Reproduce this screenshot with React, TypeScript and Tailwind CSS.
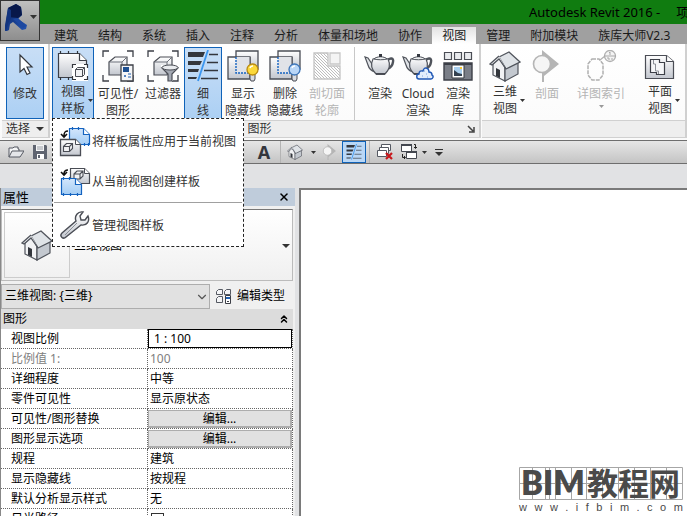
import React from 'react';
import type { ReactNode } from 'react';
import { ChevronDown, ChevronsUp, X } from 'lucide-react';

const tabs = ['建筑', '结构', '系统', '插入', '注释', '分析', '体量和场地', '协作', '视图', '管理', '附加模块', '族库大师V2.3'];

type PropertyRow = {
  id: string;
  label: string;
  value?: string;
  kind: 'input' | 'text' | 'button' | 'checkbox';
  disabled?: boolean;
};

const properties: PropertyRow[] = [
  { id: 'scale', label: '视图比例', value: '1 : 100', kind: 'input' },
  { id: 'ratio', label: '比例值 1:', value: '100', kind: 'text', disabled: true },
  { id: 'detail', label: '详细程度', value: '中等', kind: 'text' },
  { id: 'parts', label: '零件可见性', value: '显示原状态', kind: 'text' },
  { id: 'overrides', label: '可见性/图形替换', value: '编辑...', kind: 'button' },
  { id: 'display', label: '图形显示选项', value: '编辑...', kind: 'button' },
  { id: 'discipline', label: '规程', value: '建筑', kind: 'text' },
  { id: 'hidden', label: '显示隐藏线', value: '按规程', kind: 'text' },
  { id: 'analysis', label: '默认分析显示样式', value: '无', kind: 'text' },
  { id: 'sun', label: '日光路径', kind: 'checkbox' },
];

/* ---------- icons ---------- */

function Gradients() {
  return (
    <svg className="absolute h-0 w-0" aria-hidden="true">
      <defs>
        <linearGradient id="steel" x1="0" y1="0" x2="0" y2="1">
          <stop offset="0" stopColor="#ffffff" />
          <stop offset="1" stopColor="#c2c6ce" />
        </linearGradient>
        <linearGradient id="sky" x1="0" y1="0" x2="0" y2="1">
          <stop offset="0" stopColor="#d3e6fb" />
          <stop offset="1" stopColor="#a4cdf5" />
        </linearGradient>
        <linearGradient id="navy" x1="0" y1="0" x2="1" y2="1">
          <stop offset="0" stopColor="#0a2260" />
          <stop offset="1" stopColor="#2456b4" />
        </linearGradient>
        <pattern id="hatch" width="3" height="3" patternUnits="userSpaceOnUse">
          <path d="M0 0l3 3" stroke="#bdbdbd" strokeWidth="1" />
        </pattern>
      </defs>
    </svg>
  );
}

function Icon({ children, className = 'h-8 w-8', box = 32 }: { children: ReactNode; className?: string; box?: number }) {
  return (
    <svg viewBox={`0 0 ${box} ${box}`} className={`shrink-0 ${className}`} fill="none" aria-hidden="true">
      {children}
    </svg>
  );
}

function Arrow({ className = 'text-[#333]', size = 'h-[3px] w-[5px]' }: { className?: string; size?: string }) {
  return (
    <svg viewBox="0 0 10 6" preserveAspectRatio="none" className={`shrink-0 ${size} ${className}`} aria-hidden="true">
      <path d="M0 0h10L5 6z" fill="currentColor" />
    </svg>
  );
}

const RevitLogo = () => (
  <svg viewBox="0 0 24 28" className="h-7 w-6 shrink-0" aria-hidden="true">
    <path d="M3 5l8-4 5 3 1 8-4 4 9 6-1 4-4 1-9-8-3 2-1 6-4 2-1-1z" fill="url(#navy)" />
    <path d="M11 1l5 3 1 8-4 3-10-1V5z" fill="#08184a" />
    <path d="M3 5l3 2v8l-3 5-2 8-1-2z" fill="#12347e" />
    <path d="M8 16l5-1 8 8-3 2z" fill="#1d48a0" />
  </svg>
);

const CursorIcon = () => (
  <Icon>
    <path d="M11 5v17l4-3.500 3 6 3-1.500-3-6h5z" fill="#fff" stroke="#33363c" strokeWidth="1.200" />
  </Icon>
);

const TemplateIcon = () => (
  <Icon>
    <path d="M1.500 3.500h21l7 7v17h-28z" fill="url(#steel)" stroke="#3c3f47" strokeWidth="1.200" />
    <path d="M22.500 3.500v7h7" fill="#fff" stroke="#3c3f47" strokeWidth="1.200" />
    <path d="M3.500 1v3M11.500 1v3M20.500 1v3M3.500 27v3M11.500 27v3" stroke="#30333a" strokeWidth="1.200" />
    <path d="M15 14h16v17H15z" fill="#fff" />
    <path d="M15.500 18v-3.500H19M27 14.500h3.500V18M15.500 26v3.500H19M27 29.500h3.500V26" stroke="#33363c" strokeWidth="1.200" />
    <path d="M18.500 19.500l2-2h7v7l-2 2h-7zM18.500 19.500h7v7M25.500 19.500l2-2" fill="#f1f2f4" stroke="#4a4d55" />
  </Icon>
);

const CropCube = () => (
  <>
    <path d="M1 7V1h6M25 1h6v6M1 25v6h6M25 31h6v-6" stroke="#3c3f47" strokeWidth="1.300" />
    <path d="M7 12l6-5h12v13l-5 5H7z" fill="url(#steel)" stroke="#4a4d55" strokeWidth="1.200" />
    <path d="M7 12h13v13M20 12l5-5" stroke="#6d717a" />
  </>
);

const VisibilityIcon = () => (
  <Icon>
    <CropCube />
    <path d="M19 15h12v16H19z" fill="#f4f5f7" stroke="#3c3f47" strokeWidth="1.300" />
    <path d="M21 17h6v5h-6z" fill="#1d4f91" />
    <path d="M22 26h2M23 25v2M26 24h3M26 27h3" stroke="#1f5fb0" />
  </Icon>
);

const FilterIcon = () => (
  <Icon>
    <CropCube />
    <path d="M14 15h18v3l-6 6v7h-5v-7l-7-6z" fill="#fff" />
    <path d="M15 18l6 6v7h4v-7l6-6z" fill="#a4a9b3" stroke="#4a4d55" strokeWidth="1.200" />
    <ellipse cx="23" cy="17.500" rx="8" ry="2.500" fill="#e9ebee" stroke="#4a4d55" />
  </Icon>
);

const ThinLinesIcon = ({ className }: { className?: string }) => (
  <Icon className={className}>
    <path d="M1 2h17l-2 5H1zM1 11h14l-2 4H1zM1 19h11l-1 3H1zM1 27h9l-1 2H1z" fill="#33363c" />
    <path d="M22 4.500h9M20 12.500h11M17 20.500h14M14 28.500h17" stroke="#33363c" strokeWidth="1.300" />
    <path d="M21 0L11 31" stroke="#3c96ee" strokeWidth="1.800" />
  </Icon>
);

function HiddenLineIcon({ bulb, glow }: { bulb: string; glow: string }) {
  return (
    <Icon>
      <path d="M9 1h22v18H9z" fill="url(#steel)" stroke="#4a4d55" strokeWidth="1.300" />
      <path d="M1 7h22v22H1z" fill="url(#steel)" stroke="#4a4d55" strokeWidth="1.300" />
      <path d="M9 7h14v16H9z" fill="#e1e3e8" />
      <path d="M9 7v16h14" stroke="#1463c0" strokeWidth="1.400" strokeDasharray="2 1" />
      <path d="M23 7v16" stroke="#4a4d55" />
      <path d="M23 24h5v5l-1 2h-3l-1-2z" fill="#d9dce1" stroke="#4a4d55" />
      <circle cx="25.500" cy="19.500" r="5.500" fill={bulb} stroke={glow} strokeWidth="1.300" />
      <path d="M23 18a3 3 0 013-2" stroke="#fff" strokeWidth="1.600" />
    </Icon>
  );
}

const CutProfileIcon = () => (
  <Icon>
    <path d="M3 3h14v13h12v13H3z" fill="url(#hatch)" stroke="#c4c4c4" strokeWidth="1.300" />
    <path d="M19 3h10v11H19z" fill="#f4f4f4" stroke="#c8c8c8" strokeWidth="1.300" />
  </Icon>
);

const Teapot = () => (
  <>
    <path d="M8 14L4 8 1 7l3 8c1 4 4 6 7 7" fill="#dfe2e6" stroke="#50545c" strokeWidth="1.200" />
    <path d="M23 11c3-4 7-3 6 1-.500 4-3 6-6 7" stroke="#50545c" strokeWidth="2.400" />
    <path d="M9 9c-3 6-1 11 3 15h9c4-4 6-9 3-15-4-2-11-2-15 0z" fill="url(#steel)" stroke="#50545c" strokeWidth="1.200" />
    <path d="M10 9c3-3 10-3 13 0-3 1-10 1-13 0z" fill="#eceef0" stroke="#50545c" />
    <path d="M15 4h3v3h-3z" fill="#353840" />
    <path d="M12 24h9" stroke="#353840" strokeWidth="1.600" />
  </>
);

const TeapotIcon = () => <Icon><Teapot /></Icon>;

const CloudTeapotIcon = () => (
  <Icon>
    <Teapot />
    <path d="M17 29c-3 0-3-5 0-5 0-4 3-3 4-3 1-5 6-3 6 1 3 0 3 2 3 3 2 1 1 4-1 4z" fill="#e3edfc" stroke="#1f57b5" strokeWidth="1.400" />
    <path d="M20 26h1M24 24h1M25 27h1M22 21h1" stroke="#7ba2de" />
  </Icon>
);

const GalleryIcon = () => (
  <Icon>
    <path d="M2.500 2.500h7v7h-7zM12.500 2.500h7v7h-7zM22.500 2.500h7v7h-7z" fill="#e9ebee" stroke="#4a4d55" strokeWidth="1.200" />
    <path d="M2 13h28v17H2z" fill="#7a7e87" stroke="#3c3f47" strokeWidth="1.400" />
    <path d="M2 14h28" stroke="#3c3f47" strokeWidth="2" />
    <path d="M10 15h12v13H10z" fill="#fff" stroke="#35383f" />
    <path d="M12 17h8v9h-8z" fill="#a9cfee" />
    <path d="M12 20l4 3 4 1v2h-8z" fill="#33404e" />
    <path d="M18 17h2v2h-2z" fill="#f5c836" />
  </Icon>
);

const HouseIcon = ({ className }: { className?: string }) => (
  <Icon className={className}>
    <path d="M4 14v11l12 6V17L10 7z" fill="#f1f2f4" stroke="#50545c" strokeWidth="1.200" />
    <path d="M16 18v13l13-7V13z" fill="#c3c8cf" stroke="#50545c" strokeWidth="1.200" />
    <path d="M10 7l10-5 11 10-14 7z" fill="#dfe3e7" stroke="#50545c" strokeWidth="1.300" />
    <path d="M10 6l-9 8 2 1 7-6 7 10" fill="#eceef1" stroke="#50545c" strokeWidth="1.300" />
    <path d="M7 18l4 2v8l-4-2z" fill="#33363c" />
  </Icon>
);

const SectionIcon = ({ className }: { className?: string }) => (
  <Icon className={className}>
    <path d="M11 0l17 14-15 12v6h-2z" fill="#b5b5b5" />
    <circle cx="11" cy="14" r="8.500" fill="#f5f5f5" stroke="#b5b5b5" strokeWidth="1.600" />
  </Icon>
);

const CalloutIcon = () => (
  <Icon>
    <path d="M7 9h7l4 5v11l-4 5H7l-4-5V14z" stroke="#b0b0b0" strokeWidth="1.500" strokeDasharray="4 1" />
    <path d="M15 10l5-4" stroke="#b0b0b0" strokeWidth="1.300" />
    <circle cx="25" cy="6" r="5.500" fill="#f4f4f4" stroke="#b0b0b0" strokeWidth="1.300" />
    <path d="M19 6h12M24 3l1-1v3M22 8h2v2M27 8v2" stroke="#a8a8a8" />
  </Icon>
);

const PlanIcon = () => (
  <Icon>
    <path d="M1.500 5.500h21l7 6v17h-28z" fill="url(#steel)" stroke="#4a4d55" strokeWidth="1.200" />
    <path d="M22.500 5.500v6h7" fill="#fff" stroke="#4a4d55" strokeWidth="1.200" />
    <path d="M6.500 9.500h9v3h5v12h-8v-2h-6z" fill="#f5f6f8" stroke="#3c3f47" strokeWidth="1.200" />
    <path d="M9.500 10v4h2v7h3v3" stroke="#8b8f97" />
  </Icon>
);

const ApplyTemplateIcon = () => (
  <Icon>
    <path d="M10.500 2.500h14l6 6v10h-20z" fill="url(#sky)" stroke="#1463c0" strokeWidth="1.200" />
    <path d="M24.500 2.500v6h6" fill="#fff" stroke="#1463c0" strokeWidth="1.200" />
    <path d="M13.500 1v3M19.500 1v3M25.500 17v3M29.500 17v3" stroke="#1463c0" strokeWidth="1.200" />
    <path d="M9 5c-3 0-4 1-4 5M2 8l3 3 3-3" stroke="#111" strokeWidth="1.600" />
    <path d="M1.500 13.500h15l5 5v11h-20z" fill="url(#steel)" stroke="#4a4d55" strokeWidth="1.300" />
    <path d="M16.500 13.500v5h5" fill="#fff" stroke="#4a4d55" />
    <path d="M4.500 20.500l3-3h6v5l-3 3h-6zM5 20.500h5.500v5M10.500 20.500l3-3" fill="#f1f2f4" stroke="#4a4d55" strokeWidth="1.100" />
  </Icon>
);

const CreateTemplateIcon = () => (
  <Icon>
    <path d="M11.500 2.500h14l5 5v10h-19z" fill="url(#steel)" stroke="#4a4d55" strokeWidth="1.200" />
    <path d="M25.500 2.500v5h5" fill="#fff" stroke="#4a4d55" />
    <path d="M15 8l3-3h6v5l-3 3h-6zM15 8h6v5M21 8l3-3" fill="#f1f2f4" stroke="#4a4d55" strokeWidth="1.100" />
    <path d="M9 4c-3 0-4 1-4 4M2 6l3 3 3-3" stroke="#111" strokeWidth="1.600" />
    <path d="M2.500 12.500h14l6 6v10h-20z" fill="url(#sky)" stroke="#1463c0" strokeWidth="1.200" />
    <path d="M16.500 12.500v6h6" fill="#fff" stroke="#1463c0" strokeWidth="1.200" />
    <path d="M4.500 11v3M10.500 11v3M4.500 27v3M11.500 27v3M18.500 27v3" stroke="#1463c0" strokeWidth="1.200" />
  </Icon>
);

const WrenchIcon = () => (
  <Icon>
    <path
      d="M17 11c-2-5 2-10 7-9l-3 4 1 4 4 0 3-4c2 5-1 10-7 9L7 27c-3 3-7-1-4-4z"
      fill="url(#steel)"
      stroke="#4a4d55"
      strokeWidth="1.400"
    />
    <path d="M18 13L6 25" stroke="#8b8f97" />
  </Icon>
);

const OpenIcon = () => (
  <Icon className="h-4 w-4" box={16}>
    <path d="M1 13V4h4l1-1h4v2h1v2" fill="#f4f5f6" stroke="#555962" />
    <path d="M1 13l3-6h12l-4 6z" fill="#e4e6e9" stroke="#555962" />
  </Icon>
);

const SaveIcon = () => (
  <Icon className="h-4 w-4" box={16}>
    <path d="M1 1h13l1 1v13H1z" fill="#5f6470" />
    <path d="M4 1h8v6H4z" fill="#f4f5f6" />
    <path d="M5 3h6M5 5h6" stroke="#9a9ea6" />
    <path d="M5 10h7v5H5z" fill="#fff" />
    <path d="M6 11h2v3H6z" fill="#5f6470" />
  </Icon>
);

const CloseWindowsIcon = () => (
  <Icon className="h-4 w-4" box={16}>
    <path d="M4.500.500h9v6h-9z" fill="#fff" stroke="#555962" />
    <path d="M2.500 3.500h9v6h-9z" fill="#fff" stroke="#555962" />
    <path d="M.500 6.500h9v6h-9z" fill="#fff" stroke="#555962" />
    <path d="M9 9l6 6M15 9l-6 6" stroke="#c8181c" strokeWidth="2.200" />
  </Icon>
);

const SwitchWindowsIcon = () => (
  <Icon className="h-[18px] w-[18px]" box={18}>
    <path d="M1.500 1.500h10v7h-10z" fill="#fff" stroke="#444850" />
    <path d="M1 2h11" stroke="#444850" strokeWidth="2" />
    <path d="M6.500 8.500h10v7h-10z" fill="#fff" stroke="#444850" />
    <path d="M6 9h11" stroke="#444850" strokeWidth="2" />
    <path d="M14 1.500h1.500V5M14 4l1.500 1.500L17 4M2.500 11v3.500H5M4 13l1.500 1.500L4 16" stroke="#222" />
  </Icon>
);

const EditTypeIcon = () => (
  <Icon className="h-4 w-4" box={16}>
    <path d="M.500 3.500l2-2h4v5h-6zM8.500 3.500l2-2h4v5h-6zM.500 10.500l2-2h4v6h-6z" fill="#f4f5f7" stroke="#555962" />
    <path d="M9.500 7.500h5v8h-5z" fill="#fff" stroke="#3c3f47" />
    <path d="M10 9h4v2h-4z" fill="#1f5fb0" />
    <path d="M11 13.500h2" stroke="#3c3f47" />
  </Icon>
);

/* ---------- ribbon ---------- */

type RibbonButtonProps = {
  icon: ReactNode;
  lines: string[];
  width: string;
  active?: boolean;
  disabled?: boolean;
  split?: boolean;
};

function RibbonButton({ icon, lines, width, active, disabled, split }: RibbonButtonProps) {
  return (
    <button
      type="button"
      disabled={disabled}
      className={`flex h-[72px] shrink-0 flex-col items-center border pt-[2px] leading-[17px] whitespace-nowrap ${width} ${
        active ? 'border-[#0f62b8] bg-linear-to-b from-[#c8def6] to-[#acd0f4]' : 'border-transparent'
      } ${disabled ? 'text-[#b4b4b4]' : 'text-[#333]'}`}
    >
      {icon}
      <span className={`flex items-center gap-[3px] ${split ? 'pt-px pl-2' : 'pt-[3px]'}`}>
        <span className="flex flex-col items-center">
          {lines.map((line) => (
            <span key={line}>{line}</span>
          ))}
        </span>
        {split && <Arrow />}
      </span>
    </button>
  );
}

function RibbonPanel({ title, className = '', children }: { title: ReactNode; className?: string; children?: ReactNode }) {
  return (
    <section className={`flex shrink-0 flex-col border-r-2 border-[#d0d0d0] pt-[3px] ${className}`}>
      <div className="flex h-[73px]">{children}</div>
      <div className="flex h-[18px] items-center border-y border-[#d0d0d0] bg-[#eee] text-[#333]">{title}</div>
    </section>
  );
}

function TemplateMenu() {
  const item = 'flex h-10 w-full items-center gap-px px-[6px] text-left whitespace-nowrap';
  return (
    <div className="absolute top-[71px] left-0 z-10 w-48 border border-dashed border-[#222] bg-white pt-[3px] text-[#333]">
      <button type="button" className={item}>
        <ApplyTemplateIcon />
        将样板属性应用于当前视图
      </button>
      <button type="button" className={item}>
        <CreateTemplateIcon />
        从当前视图创建样板
      </button>
      <hr className="mx-px mb-[3px] border-[#a0a0a0]" />
      <button type="button" className={item}>
        <WrenchIcon />
        管理视图样板
      </button>
    </div>
  );
}

function Ribbon() {
  return (
    <div className="flex bg-linear-to-b from-white to-[#fafafa] pb-[2px] pl-[2px]">
      <RibbonPanel
        className="w-12"
        title={
          <button type="button" className="flex items-center gap-[6px] pl-1">
            选择
            <Arrow size="h-1 w-2" />
          </button>
        }
      >
        <div className="pl-1">
          <RibbonButton icon={<CursorIcon />} lines={['修改']} width="w-[38px]" active />
        </div>
      </RibbonPanel>

      <RibbonPanel
        className="pl-[2px]"
        title={
          <>
            <span className="flex-1 text-center">图形</span>
            <button type="button" aria-label="图形显示选项" className="pr-1">
              <svg viewBox="0 0 8 8" className="h-2 w-2" aria-hidden="true">
                <path d="M1 1l5 5M7 2v5H2" fill="none" stroke="#444" strokeWidth="1.500" />
              </svg>
            </button>
          </>
        }
      >
        <div className="relative">
          <RibbonButton icon={<TemplateIcon />} lines={['视图', '样板']} width="w-[42px]" active split />
          <TemplateMenu />
        </div>
        <RibbonButton icon={<VisibilityIcon />} lines={['可见性/', '图形']} width="w-12" />
        <RibbonButton icon={<FilterIcon />} lines={['过滤器']} width="w-[42px]" />
        <RibbonButton icon={<ThinLinesIcon />} lines={['细', '线']} width="w-[38px]" active />
        <RibbonButton icon={<HiddenLineIcon bulb="#fbd83a" glow="#b98a12" />} lines={['显示', '隐藏线']} width="w-[42px]" />
        <RibbonButton icon={<HiddenLineIcon bulb="#b9d6f7" glow="#3c74b8" />} lines={['删除', '隐藏线']} width="w-[42px]" />
        <RibbonButton icon={<CutProfileIcon />} lines={['剖切面', '轮廓']} width="w-[42px]" disabled />
        <div className="mr-[6px] ml-[6px] w-px bg-[#c8c8c8]" />
        <RibbonButton icon={<TeapotIcon />} lines={['渲染']} width="w-[38px]" />
        <RibbonButton icon={<CloudTeapotIcon />} lines={['Cloud', '渲染']} width="w-[38px]" />
        <RibbonButton icon={<GalleryIcon />} lines={['渲染', '库']} width="w-[42px]" />
      </RibbonPanel>

      <RibbonPanel className="flex-1 pl-px" title={null}>
        <RibbonButton icon={<HouseIcon />} lines={['三维', '视图']} width="w-[46px]" split />
        <RibbonButton icon={<SectionIcon />} lines={['剖面']} width="w-[38px]" disabled />
        <button
          type="button"
          disabled
          className="flex h-[72px] w-[70px] shrink-0 flex-col items-center gap-[3px] border border-transparent pt-[2px] leading-[17px] text-[#b4b4b4]"
        >
          <CalloutIcon />
          <span>详图索引</span>
          <Arrow className="text-[#999]" />
        </button>
        <RibbonButton icon={<PlanIcon />} lines={['平面', '视图']} width="w-12" split />
      </RibbonPanel>
    </div>
  );
}

function QuickAccess() {
  const divider = 'h-full w-px bg-[#b4b4b4]';
  return (
    <div className="flex h-6 shrink-0 items-center border-y border-[#6e6e6e] bg-linear-to-b from-[#e6e6e6] to-[#c4c4c4] pl-2">
      <button type="button" aria-label="打开"><OpenIcon /></button>
      <button type="button" aria-label="保存" className="ml-2"><SaveIcon /></button>
      <button type="button" aria-label="标记" className="ml-[180px] shrink-0">
        <Icon className="h-4 w-4" box={16}>
          <path d="M2 5h11l2 3-2 3H2z" fill="#fff" stroke="#555962" />
        </Icon>
      </button>
      <button type="button" aria-label="文字" className="ml-2 flex w-6 justify-center text-lg leading-5 font-bold text-[#33363c]">A</button>
      <span className={`${divider} ml-1`} />
      <button type="button" aria-label="三维视图" className="ml-[6px] flex items-center gap-2">
        <HouseIcon className="h-4 w-4" />
        <Arrow />
      </button>
      <button type="button" aria-label="剖面" className="ml-[6px]"><SectionIcon className="h-4 w-4" /></button>
      <button
        type="button"
        aria-label="细线"
        className="ml-1 flex h-[22px] w-6 items-center justify-center border border-[#0f62b8] bg-[#b9d7f6]"
      >
        <ThinLinesIcon className="h-4 w-4" />
      </button>
      <span className={`${divider} ml-[3px]`} />
      <button type="button" aria-label="关闭隐藏对象" className="ml-[7px]"><CloseWindowsIcon /></button>
      <button type="button" aria-label="切换窗口" className="ml-[7px] flex items-center gap-1">
        <SwitchWindowsIcon />
        <Arrow />
      </button>
      <button type="button" aria-label="自定义快速访问工具栏" className="ml-2 flex flex-col items-center gap-[2px]">
        <span className="h-px w-2 bg-[#333]" />
        <Arrow size="h-1 w-2" />
      </button>
    </div>
  );
}

/* ---------- properties ---------- */

function PropertyValue({ row }: { row: PropertyRow }) {
  switch (row.kind) {
    case 'input':
      return <input id={row.id} defaultValue={row.value} className="block h-[19px] w-full border border-black bg-white px-[5px]" />;
    case 'button':
      return (
        <button id={row.id} type="button" className="block h-[18px] w-full border-t border-r-2 border-b-2 border-l border-[#adadad] bg-[#e1e1e1] leading-4">
          {row.value}
        </button>
      );
    case 'checkbox':
      return <input id={row.id} type="checkbox" className="mt-[2px] ml-[3px] block h-[13px] w-[13px] appearance-none border border-[#333] bg-white" />;
    default:
      return <output id={row.id} className="block pl-[2px]">{row.value}</output>;
  }
}

function PropertiesPanel() {
  return (
    <aside className="flex w-[295px] shrink-0 flex-col border-l border-[#888] bg-[#f0f0f0]">
      <div className="flex h-[18px] shrink-0 items-center justify-between bg-[#bfccdb] pr-[5px] pl-[2px] text-[13px]">
        <h2>属性</h2>
        <button type="button" aria-label="关闭"><X className="h-3 w-3" strokeWidth={3} /></button>
      </div>

      <div className="mt-[3px] mr-[2px] flex shrink-0 border border-[#bbb] border-t-[#777] bg-linear-to-b from-white to-[#f0f0f0] p-[2px]">
        <div className="flex h-[66px] w-[66px] items-center justify-center border border-[#ccc]">
          <HouseIcon />
        </div>
        <button type="button" className="flex flex-1 items-center justify-between pt-[2px] pl-1">
          三维视图
          <Arrow size="h-1 w-2" />
        </button>
      </div>

      <div className="mt-[2px] flex h-[26px] shrink-0 items-center">
        <div className="relative w-[209px]">
          <select aria-label="视图" className="h-[25px] w-full appearance-none border border-[#adadad] bg-[#e1e1e1] pl-[3px]">
            <option>三维视图: {'{三维}'}</option>
          </select>
          <ChevronDown className="pointer-events-none absolute top-[6px] right-0 h-[14px] w-4 text-[#555]" strokeWidth={2} />
        </div>
        <button type="button" className="ml-[6px] flex items-center gap-[5px]">
          <EditTypeIcon />
          编辑类型
        </button>
      </div>

      <div className="mr-[2px] flex h-5 shrink-0 items-center justify-between bg-[#dcdcdc] pr-[3px] pl-[2px]">
        <h3>图形</h3>
        <ChevronsUp className="h-3 w-3" strokeWidth={3} />
      </div>

      <table className="mr-[2px] table-fixed border-separate border-spacing-0 bg-white">
        <colgroup>
          <col className="w-[147px]" />
          <col />
        </colgroup>
        <tbody>
          {properties.map((row) => (
            <tr key={row.id} className={row.disabled ? 'text-[#808080]' : ''}>
              <th scope="row" className="h-5 border-r border-b border-dotted border-[#666] p-0 pl-[10px] text-left font-normal">
                <label htmlFor={row.id} className="block leading-[18px]">{row.label}</label>
              </th>
              <td className="h-5 border-r border-b border-dotted border-[#666] p-0 leading-[18px]">
                <PropertyValue row={row} />
              </td>
            </tr>
          ))}
        </tbody>
      </table>
    </aside>
  );
}

function Watermark() {
  return (
    <div className="w-[164px] text-[#4a4a4a]">
      <svg viewBox="0 0 164 33" className="block w-full" aria-label="BIM教程网">
        <path
          d="M.5.500h163v32H.5zM26.500 0v32M30.500 0v32M36.500 0v32M67.500 0v32M99.500 0v32M131.500 0v32M13.500 0v32M52.500 0v32M83.500 0v32M115.500 0v32M147.500 0v32M0 16.500h164"
          fill="none"
          stroke="#a6a6a6"
        />
        <g fill="currentColor">
          <text x="2" y="28" fontSize="33" fontWeight="800" fontFamily="Lato, sans-serif">BIM</text>
          <text x="68" y="28" fontSize="31" fontWeight="700" fontFamily="'Noto Sans CJK SC', sans-serif">教程网</text>
        </g>
      </svg>
      <div className="mt-px flex justify-between font-['Liberation_Sans',sans-serif] text-[11px] leading-[12px]">
        {Array.from('www.ifbim.com').map((letter, i) => (
          <span key={i}>{letter}</span>
        ))}
      </div>
    </div>
  );
}

export default function App() {
  return (
    <div className="flex h-screen flex-col overflow-hidden bg-[#e1e2e4] font-['Noto_Sans','Noto_Sans_CJK_SC',sans-serif] text-xs leading-4 text-black">
      <Gradients />
      <header className="flex shrink-0 bg-[#a0a0a0]">
        <button
          type="button"
          aria-label="应用程序菜单"
          className="flex h-[41px] w-10 shrink-0 items-center gap-px border border-[#333] bg-linear-to-b from-[#c0c0c0] to-[#8e8e8e] pb-2 pl-1"
        >
          <RevitLogo />
          <Arrow size="h-1 w-[7px]" />
        </button>
        <div className="min-w-0 flex-1">
          <div className="flex h-6 items-center gap-4 overflow-hidden bg-[#107c10] pl-[489px] text-[13px] whitespace-nowrap">
            <h1>Autodesk Revit 2016 -</h1>
            <span>项目1</span>
          </div>
          <nav className="flex h-5 items-end pl-1 text-[#1a1a1a]">
            {tabs.map((tab) => (
              <button
                key={tab}
                type="button"
                className={`h-[17px] px-[10px] whitespace-nowrap ${tab === '视图' ? 'bg-linear-to-b from-[#e2e2e2] to-white' : ''}`}
              >
                {tab}
              </button>
            ))}
          </nav>
        </div>
      </header>

      <Ribbon />
      <QuickAccess />

      <main className="flex min-h-0 flex-1 gap-1 pt-6">
        <PropertiesPanel />
        <div className="flex flex-1 items-end justify-end border-t-2 border-l-2 border-[#7a7a7a] bg-white pr-1 pb-[3px]">
          <Watermark />
        </div>
      </main>
    </div>
  );
}
